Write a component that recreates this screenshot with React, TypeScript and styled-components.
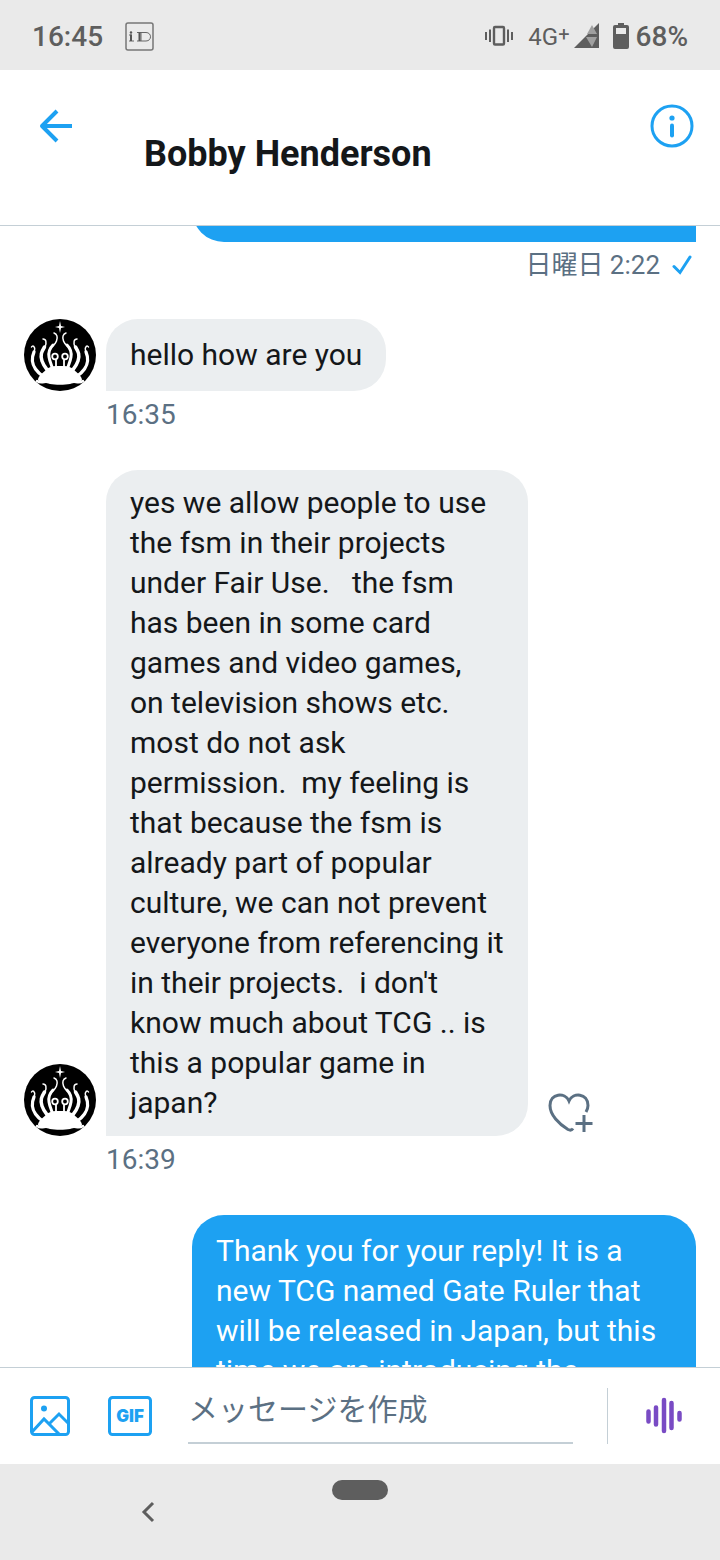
import React from "react";
import styled, { createGlobalStyle } from "styled-components";

const blue = "#1da1f2";
const slate = "#5b7083";
const ink = "#14171a";
const line = "#c4cfd6";

const GlobalStyle = createGlobalStyle`
  *, *::before, *::after { box-sizing: border-box; }
  body {
    margin: 0;
    background: #fff;
    color: ${ink};
    font-family: Roboto, "Noto Sans CJK JP", sans-serif;
  }
  button, input { font: inherit; color: inherit; }
`;

const Screen = styled.div`
  display: flex;
  flex-direction: column;
  height: 100vh;
`;

const StatusBar = styled.div`
  flex: none;
  display: flex;
  align-items: center;
  justify-content: space-between;
  padding: 22px 32px 18px;
  background: #eaeaea;
  color: #5e5e5e;
  font-size: 28px;
  font-weight: 500;
  line-height: 30px;
`;

const StatusGroup = styled.div<{ $gap: number }>`
  display: flex;
  align-items: center;
  gap: ${(p) => p.$gap}px;
  svg { display: block; position: relative; top: -1px; }
`;

const Network = styled.span`
  display: flex;
  align-items: center;
  gap: 4px;
  margin: 0 6px 0 8px;
  font-size: 24px;
  font-weight: 400;
`;

const Raised = styled.sup`
  font-size: 20px;
  line-height: 0;
  vertical-align: 4px;
`;

const Header = styled.header`
  flex: none;
  display: flex;
  align-items: flex-start;
  gap: 52px;
  padding: 30px 23px 50px 20px;
  border-bottom: 1px solid ${line};
`;

const IconButton = styled.button`
  flex: none;
  display: flex;
  align-items: center;
  justify-content: center;
  padding: 0;
  border: 0;
  background: none;
  cursor: pointer;
`;

const BackButton = styled(IconButton)`
  width: 72px;
  height: 52px;
`;

const InfoButton = styled(IconButton)`
  width: 50px;
  height: 52px;
  justify-content: flex-end;
`;

const Name = styled.h1`
  flex: 1;
  margin: 33px 0 0;
  font-size: 36px;
  font-weight: 700;
  line-height: 42px;
`;

const Thread = styled.main`
  flex: 1;
  min-height: 0;
  overflow-y: auto;
  scrollbar-width: none;
  display: flex;
  flex-direction: column;
  gap: 39px;
  padding: 0 24px;
`;

const Outgoing = styled.article`
  flex: none;
  display: flex;
  flex-direction: column;
  align-items: flex-end;
`;

const Incoming = styled.article`
  flex: none;
  display: grid;
  grid-template-columns: 72px 1fr;
  column-gap: 10px;
`;

const BubbleRow = styled.div`
  display: flex;
  align-items: flex-end;
  gap: 20px;
`;

const Bubble = styled.p<{ $mine?: boolean; $long?: boolean }>`
  margin: 0;
  max-width: ${(p) => (p.$mine ? 504 : 422)}px;
  padding: ${(p) => (p.$long ? 13 : 16)}px 24px;
  border-radius: ${(p) => (p.$mine ? "32px 32px 0 32px" : "32px 32px 32px 0")};
  background: ${(p) => (p.$mine ? blue : "#ebeef0")};
  color: ${(p) => (p.$mine ? "#fff" : ink)};
  font-size: 30px;
  line-height: 40px;
  white-space: pre-wrap;
`;

const EarlierBubble = styled(Bubble)`
  width: 504px;
  height: 72px;
  margin-top: -56px;
`;

const AvatarArt = styled.svg`
  display: block;
  align-self: end;
`;

const Time = styled.time`
  grid-column: 2;
  margin-top: 8px;
  color: ${slate};
  font-size: 28px;
  line-height: 32px;
`;

const SentLine = styled.div`
  display: flex;
  align-items: center;
  gap: 12px;
  padding-right: 4px;
  margin-top: 8px;
  color: ${slate};
  font-size: 26px;
  line-height: 30px;
`;

const ReactButton = styled(IconButton)`
  width: 46px;
  height: 44px;
`;

const Composer = styled.form`
  flex: none;
  display: flex;
  align-items: flex-start;
  padding: 20px 37px 20px 28px;
  border-top: 1px solid ${line};
`;

const Tool = styled(IconButton)`
  width: 44px;
  height: 56px;
  margin-right: 36px;
`;

const MessageInput = styled.input`
  flex: 1;
  min-width: 0;
  height: 56px;
  padding: 0 0 12px;
  border: 0;
  border-bottom: 2px solid ${line};
  border-radius: 0;
  outline: 0;
  background: none;
  font-size: 30px;
  line-height: 40px;
  &::placeholder { color: ${slate}; opacity: 1; }
`;

const Divider = styled.span`
  width: 1px;
  height: 56px;
  margin: 0 37px 0 34px;
  background: ${line};
`;

const VoiceButton = styled(IconButton)`
  width: 38px;
  height: 56px;
`;

const NavBar = styled.nav`
  flex: none;
  display: grid;
  grid-template-columns: 1fr 56px 1fr;
  height: 96px;
  padding-top: 16px;
  background: #eaeaea;
`;

const NavBack = styled(IconButton)`
  justify-self: center;
  width: 48px;
  height: 48px;
  margin: 8px 36px 0 0;
`;

const HomePill = styled.button`
  height: 20px;
  padding: 0;
  border: 0;
  border-radius: 10px;
  background: #5e5e5e;
`;

const Tentacles = () => (
  <g fill="none" stroke="#fff" strokeLinecap="round" strokeLinejoin="round">
    <path strokeWidth="1.5" d="M30 14c3 1 4 4 2.500 8c-1 3-3 4-5 6" />
    <path strokeWidth="3" d="M29 26c-3 3-5 6-4 12s3 8 4 14" />
    <path strokeWidth="1.5" d="M19 20c3 0 4 3 2 8" />
    <path strokeWidth="3.500" d="M20.500 28c-3 5-4.500 8-2.500 14s5 8 8 13" />
    <path strokeWidth="1.400" d="M7.500 28c1-2 4-1 3 4" />
    <path strokeWidth="3.200" d="M10 33c-3 7-2 12 1.500 17s6 6 10 9" />
    <path strokeWidth="2.400" d="M13 62c4 3 8 0 10 1" />
  </g>
);

const Avatar = () => (
  <AvatarArt width="72" height="72" viewBox="0 0 72 72" role="img" aria-label="Bobby Henderson">
    <circle cx="36" cy="36" r="36" fill="#000" />
    <path fill="#fff" d="M36 2l1 5 4 1-4 1-1 5-1-5-4-1 4-1z" />
    <Tentacles />
    <g transform="matrix(-1 0 0 1 72 0)">
      <Tentacles />
    </g>
    <path
      fill="#fff"
      d="M22 51c3-3 6-4 10-4h8c4 0 7 1 10 4 4 3 8 7 8 10-2 3-8 2-12 4-5 1-15 1-20 0-4-2-10-1-12-4 0-3 4-7 8-10z"
    />
    <g fill="none" stroke="#fff" strokeWidth="1.800">
      <circle cx="31" cy="37.500" r="2.800" />
      <circle cx="41" cy="37.500" r="2.800" />
      <path d="M32 41v7M40 41v7" />
    </g>
  </AvatarArt>
);

export default function App() {
  return (
    <>
      <GlobalStyle />
      <Screen>
        <StatusBar>
          <StatusGroup $gap={22}>
            <span>16:45</span>
            <svg width="29" height="29" viewBox="0 0 29 29" aria-hidden="true">
              <rect x="1" y="1" width="27" height="27" rx="2" fill="none" stroke="#777" strokeWidth="1.500" />
              <path
                fill="none"
                stroke="#666"
                strokeWidth="1"
                d="M4 13h2.500v6M4 19h5M12 10.500h9c6 0 6 8.500 0 8.500h-5v-8.500M12 19h4"
              />
              <path stroke="#555" strokeWidth="2" d="M6 12.500v6.500M14.500 10.500v8.500" />
              <circle cx="6" cy="10.500" r="1.200" fill="#555" />
            </svg>
          </StatusGroup>
          <StatusGroup $gap={7}>
            <svg width="28" height="22" viewBox="0 0 28 22" fill="none" stroke="#5e5e5e" aria-hidden="true">
              <rect x="9" y="2" width="10" height="17.500" rx="1" strokeWidth="2.400" />
              <path strokeWidth="2" d="M1 7v8M5 4.500v12.500M23 4.500v12.500M27 7v8" />
            </svg>
            <Network>
              <span>
                4G<Raised>+</Raised>
              </span>
              <svg width="26" height="26" viewBox="0 0 26 26" aria-hidden="true">
                <path fill="#5e5e5e" d="M25 0v25H0z" />
                <path fill="#a0a0a0" d="M18 2l5 9H13zM12 14h11l-5 10z" />
              </svg>
            </Network>
            <svg width="16" height="26" viewBox="0 0 16 26" aria-hidden="true">
              <path fill="#5e5e5e" fillRule="evenodd" d="M5 0h6v2h3q2 0 2 2v20q0 2-2 2H2q-2 0-2-2V4q0-2 2-2h3zM3 5v6h10V5z" />
            </svg>
            <span>68%</span>
          </StatusGroup>
        </StatusBar>

        <Header>
          <BackButton type="button" aria-label="Back">
            <svg width="34" height="34" viewBox="0 0 34 34" fill="none" stroke={blue} strokeWidth="4" aria-hidden="true">
              <path d="M18 2L3 17l15 15M3 17h30" strokeLinejoin="round" />
            </svg>
          </BackButton>
          <Name>Bobby Henderson</Name>
          <InfoButton type="button" aria-label="Conversation info">
            <svg width="50" height="44" viewBox="-3 0 50 44" aria-hidden="true">
              <circle cx="22" cy="22" r="20" fill="none" stroke={blue} strokeWidth="3" />
              <circle cx="22" cy="14" r="2.600" fill={blue} />
              <path d="M22 21.500v10" stroke={blue} strokeWidth="4" strokeLinecap="round" />
            </svg>
          </InfoButton>
        </Header>

        <Thread>
          <Outgoing>
            <EarlierBubble $mine />
            <SentLine>
              <time>日曜日 2:22</time>
              <svg width="20" height="20" viewBox="0 0 20 20" fill="none" stroke={blue} strokeWidth="3" aria-label="Sent">
                <path d="M2 11.500l6 6L18 2" strokeLinecap="round" />
              </svg>
            </SentLine>
          </Outgoing>

          <Incoming>
            <Avatar />
            <BubbleRow>
              <Bubble>hello how are you</Bubble>
            </BubbleRow>
            <Time>16:35</Time>
          </Incoming>

          <Incoming>
            <Avatar />
            <BubbleRow>
              <Bubble $long>
                {
                  "yes we allow people to use the fsm in their projects under Fair Use.   the fsm has been in some card games and video games,\non television shows etc. most do not ask\npermission.  my feeling is that because the fsm is already part of popular culture, we can not prevent everyone from referencing it in their projects.  i don't know much about TCG .. is this a popular game in japan?"
                }
              </Bubble>
              <ReactButton type="button" aria-label="Add reaction">
                <svg width="46" height="44" viewBox="0 0 46 44" fill="none" stroke={slate} strokeWidth="3" aria-hidden="true">
                  <path d="M25 36.500c-1 1.500-3 2-5 1C11 32 2 23 2 13.500 2 1 17 0 21 9 25 0 40 1 40 13.500q0 3-2 6.500" />
                  <path d="M36 23v17M27.500 31.500h17" />
                </svg>
              </ReactButton>
            </BubbleRow>
            <Time>16:39</Time>
          </Incoming>

          <Outgoing>
            <Bubble $mine>
              Thank you for your reply! It is a new TCG named Gate Ruler that will be released in Japan, but this time we
              are introducing the
            </Bubble>
          </Outgoing>
        </Thread>

        <Composer>
          <Tool type="button" aria-label="Add photo">
            <svg width="40" height="40" viewBox="0 0 40 40" fill="none" stroke={blue} strokeWidth="3" aria-hidden="true">
              <rect x="1.500" y="1.500" width="37" height="37" rx="3" />
              <path d="M2 36l12-13 16 16M20 27l9-9 10 10" />
              <circle cx="14" cy="12.500" r="3" fill={blue} stroke="none" />
            </svg>
          </Tool>
          <Tool type="button" aria-label="Add GIF">
            <svg width="44" height="40" viewBox="0 0 44 40" fill="none" stroke={blue} aria-hidden="true">
              <rect x="1.500" y="1.500" width="41" height="37" rx="3" strokeWidth="3" />
              <text
                x="22"
                y="26"
                textAnchor="middle"
                fill={blue}
                stroke="none"
                fontFamily="Inter, sans-serif"
                fontSize="17"
                fontWeight="900"
              >
                GIF
              </text>
            </svg>
          </Tool>
          <MessageInput type="text" aria-label="メッセージを作成" placeholder="メッセージを作成" />
          <Divider />
          <VoiceButton type="button" aria-label="Record voice message">
            <svg width="38" height="38" viewBox="0 0 38 38" stroke="#794bc4" strokeWidth="4.500" strokeLinecap="round" aria-hidden="true">
              <path d="M3.500 14.500v10M11 10.500v17M19 3v31M26.500 6v25M34.500 16v6.500" />
            </svg>
          </VoiceButton>
        </Composer>

        <NavBar aria-label="System navigation">
          <NavBack type="button" aria-label="Back">
            <svg width="14" height="22" viewBox="0 0 14 22" fill="none" stroke="#5e5e5e" strokeWidth="3" aria-hidden="true">
              <path d="M12 2L3 11l9 9" />
            </svg>
          </NavBack>
          <HomePill type="button" aria-label="Home" />
        </NavBar>
      </Screen>
    </>
  );
}
